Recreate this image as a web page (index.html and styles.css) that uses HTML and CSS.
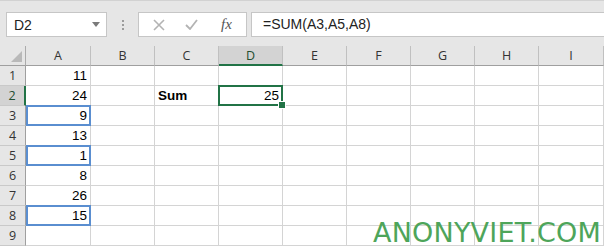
FILE: index.html
```html
<!DOCTYPE html>
<html lang="en">
<head>
    <meta charset="UTF-8">
    <meta name="viewport" content="width=device-width, initial-scale=1.0">
    <title>SUM of cells</title>
    <link rel="stylesheet" href="styles.css">
</head>
<body>
    <div class="toolbar">
        <div class="namebox">
            <span>D2</span>
            <svg class="drop" width="8" height="5" viewBox="0 0 8 5"><path d="M0 0h8L4 5z" fill="#7a7a7a"/></svg>
        </div>
        <div class="grip"><i></i><i></i><i></i></div>
        <div class="fbuttons">
            <svg class="cancel" width="12" height="12" viewBox="0 0 12 12"><path d="M1 1l10 10M11 1L1 11" stroke="#b3b3b3" stroke-width="1.6" fill="none"/></svg>
            <svg class="enter" width="13" height="11" viewBox="0 0 13 11"><path d="M1 6l4 4 7-9" stroke="#b3b3b3" stroke-width="1.8" fill="none"/></svg>
            <span class="fx">fx</span>
        </div>
        <div class="formula">=SUM(A3,A5,A8)</div>
    </div>

    <div class="sheet">
        <!-- header row -->
        <div class="corner"><span class="tri"></span></div>
        <div class="colhead">A</div>
        <div class="colhead">B</div>
        <div class="colhead">C</div>
        <div class="colhead active">D</div>
        <div class="colhead">E</div>
        <div class="colhead">F</div>
        <div class="colhead">G</div>
        <div class="colhead">H</div>
        <div class="colhead">I</div>

        <div class="rowhead">1</div>
        <div class="cell num">11</div><div class="cell"></div><div class="cell"></div><div class="cell"></div><div class="cell"></div><div class="cell"></div><div class="cell"></div><div class="cell"></div><div class="cell"></div>

        <div class="rowhead active">2</div>
        <div class="cell num">24</div><div class="cell"></div><div class="cell bold">Sum</div><div class="cell num current">25<span class="handle"></span></div><div class="cell"></div><div class="cell"></div><div class="cell"></div><div class="cell"></div><div class="cell"></div>

        <div class="rowhead">3</div>
        <div class="cell num ref">9</div><div class="cell"></div><div class="cell"></div><div class="cell"></div><div class="cell"></div><div class="cell"></div><div class="cell"></div><div class="cell"></div><div class="cell"></div>

        <div class="rowhead">4</div>
        <div class="cell num">13</div><div class="cell"></div><div class="cell"></div><div class="cell"></div><div class="cell"></div><div class="cell"></div><div class="cell"></div><div class="cell"></div><div class="cell"></div>

        <div class="rowhead">5</div>
        <div class="cell num ref">1</div><div class="cell"></div><div class="cell"></div><div class="cell"></div><div class="cell"></div><div class="cell"></div><div class="cell"></div><div class="cell"></div><div class="cell"></div>

        <div class="rowhead">6</div>
        <div class="cell num">8</div><div class="cell"></div><div class="cell"></div><div class="cell"></div><div class="cell"></div><div class="cell"></div><div class="cell"></div><div class="cell"></div><div class="cell"></div>

        <div class="rowhead">7</div>
        <div class="cell num">26</div><div class="cell"></div><div class="cell"></div><div class="cell"></div><div class="cell"></div><div class="cell"></div><div class="cell"></div><div class="cell"></div><div class="cell"></div>

        <div class="rowhead">8</div>
        <div class="cell num ref">15</div><div class="cell"></div><div class="cell"></div><div class="cell"></div><div class="cell"></div><div class="cell"></div><div class="cell"></div><div class="cell"></div><div class="cell"></div>

        <div class="rowhead">9</div>
        <div class="cell"></div><div class="cell"></div><div class="cell"></div><div class="cell"></div><div class="cell"></div><div class="cell"></div><div class="cell"></div><div class="cell"></div><div class="cell"></div>

        <div class="watermark">ANONYVIET.COM</div>
    </div>
</body>
</html>
```

FILE: styles.css
```css
body {
    margin: 0;
    font-family: "Liberation Sans", Arial, sans-serif;
    background: #ffffff;
    width: 604px;
    height: 247px;
    overflow: hidden;
}
.toolbar {
    display: flex;
    align-items: flex-start;
    height: 46px;
    box-sizing: border-box;
    padding-top: 11px;
    background: #e6e6e6;
    border-top: 1px solid #d2d2d2;
}
.namebox {
    box-sizing: border-box;
    width: 101px;
    height: 25px;
    margin-left: 6px;
    padding: 0 6px 0 7px;
    display: flex;
    align-items: center;
    justify-content: space-between;
    background: #fff;
    border: 1px solid #c6c6c6;
    font-size: 14px;
    color: #222;
}
.grip {
    width: 31px;
    height: 25px;
    display: flex;
    flex-direction: column;
    align-items: center;
    justify-content: center;
    gap: 2px;
}
.grip i {
    width: 2px;
    height: 2px;
    background: #9c9c9c;
}
.fbuttons {
    box-sizing: border-box;
    width: 109px;
    height: 25px;
    margin-right: 4px;
    display: flex;
    align-items: center;
    padding-left: 14px;
    background: #fff;
    border: 1px solid #c6c6c6;
}
.enter {
    margin-left: 20px;
}
.fx {
    margin-left: 23px;
    font-family: "Liberation Serif", serif;
    font-style: italic;
    font-size: 15px;
    color: #555;
}
.formula {
    flex: 1;
    box-sizing: border-box;
    height: 25px;
    padding-left: 11px;
    line-height: 23px;
    background: #fff;
    border: 1px solid #c6c6c6;
    border-right: none;
    font-size: 14px;
    color: #222;
}
.sheet {
    position: relative;
    display: grid;
    grid-template-columns: 26px 65px repeat(7, 64px) 1fr;
    grid-auto-rows: 20px;
}
.corner, .colhead, .rowhead, .cell {
    box-sizing: border-box;
}
.corner {
    position: relative;
    background: #e6e6e6;
    border-right: 1px solid #ababab;
    border-bottom: 1px solid #9f9f9f;
}
.tri {
    position: absolute;
    right: 3px;
    bottom: 3px;
    width: 0;
    height: 0;
    border-left: 11px solid transparent;
    border-bottom: 11px solid #b9b9b9;
}
.colhead {
    background: #e6e6e6;
    border-right: 1px solid #c0c0c0;
    border-bottom: 1px solid #9f9f9f;
    text-align: center;
    font-family: "Open Sans", sans-serif;
    font-size: 12.5px;
    line-height: 20px;
    color: #333;
}
.colhead.active {
    background: #d3d3d3;
    border-bottom: 2px solid #217346;
    color: #1f4e30;
}
.rowhead {
    background: #e6e6e6;
    border-right: 1px solid #9f9f9f;
    border-bottom: 1px solid #c9c9c9;
    text-align: center;
    font-family: "Open Sans", sans-serif;
    font-size: 12.5px;
    line-height: 19px;
    color: #333;
}
.rowhead.active {
    background: #d3d3d3;
    border-right: 2px solid #217346;
    color: #1f4e30;
}
.cell {
    position: relative;
    border-right: 1px solid #d4d4d4;
    border-bottom: 1px solid #d4d4d4;
    padding: 0 3px;
    font-size: 13.5px;
    line-height: 20px;
    color: #000;
    white-space: nowrap;
}
.num {
    text-align: right;
}
.bold {
    font-weight: bold;
}
.ref::after, .current::after {
    content: "";
    position: absolute;
    top: -1px;
    left: -1px;
    right: -1px;
    bottom: -1px;
    border: 2px solid #5a8ed0;
}
.ref::after {
    left: 0;
}
.current::after {
    border-color: #217346;
}
.handle {
    position: absolute;
    right: -4px;
    bottom: -4px;
    width: 6px;
    height: 6px;
    background: #217346;
    border: 1px solid #fff;
    z-index: 2;
}
.watermark {
    position: absolute;
    left: 373px;
    top: 175px;
    font-family: "DejaVu Sans", sans-serif;
    font-size: 27px;
    line-height: 0.9;
    color: #4ea55a;
    letter-spacing: 0.2px;
}
```
